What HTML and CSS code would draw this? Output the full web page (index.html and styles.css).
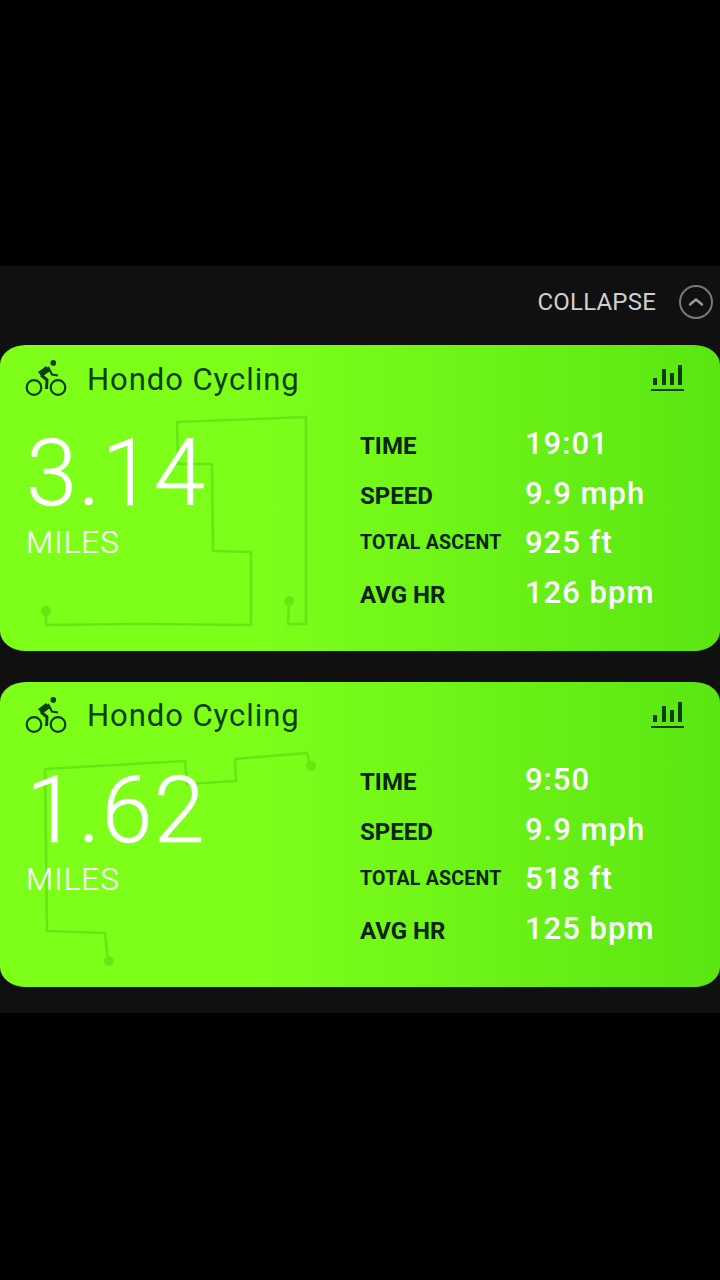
FILE: index.html
```html
<!DOCTYPE html>
<html lang="en">
<head>
<meta charset="utf-8">
<title>Hondo Cycling</title>
<link rel="stylesheet" href="styles.css">
</head>
<body>
<main class="panel">
  <div class="collapse-bar">
    <span class="collapse-label">COLLAPSE</span>
    <svg class="collapse-icon" viewBox="0 0 36 36"><circle cx="18" cy="18" r="16" fill="none" stroke="#77797a" stroke-width="2"/><path d="M12 20.5l6-5 6 5" fill="none" stroke="#9a9c9c" stroke-width="2.4" stroke-linecap="round" stroke-linejoin="round"/></svg>
  </div>
  <section class="card">
    <svg class="route" viewBox="0 0 720 306"><g fill="none" stroke="#64e814" stroke-width="2.6" stroke-linejoin="round"><path d="M46 266V280L140 279 251 280V207L213 206 212 119 178 119 177 77 306 72 306 279 288 279 289 256"/></g><circle cx="46" cy="266" r="5" fill="#64e814"/><circle cx="289" cy="256" r="5" fill="#64e814"/></svg>
    <header class="card-head">
      <svg class="bike" viewBox="0 0 42 36"><g fill="none" stroke="#0b3d06"><circle cx="9" cy="27.500" r="7.300" stroke-width="2.200"/><circle cx="33" cy="27.500" r="7.300" stroke-width="2.200"/><path d="M15 14.500L23 8.500" stroke-width="6.500"/><path d="M23 7L27 14.500 33 15.500" stroke-width="2.200"/><path d="M16 15L22 20 21.500 29" stroke-width="3"/></g><circle cx="28.300" cy="2.900" r="2.800" fill="#0b3d06"/></svg>
      <h2 class="card-title">Hondo Cycling</h2>
      <svg class="chart" viewBox="0 0 34 26"><g fill="#0b3d06"><rect x="2" y="13" width="4" height="7"/><rect x="11" y="4" width="4" height="16"/><rect x="19" y="8" width="4" height="12"/><rect x="27" y="0" width="4" height="20"/><rect x="0" y="24" width="33" height="2"/></g></svg>
    </header>
    <div class="card-body">
      <div class="distance">
        <div class="distance-value">3.14</div>
        <div class="distance-unit">MILES</div>
      </div>
      <dl class="stats">
        <dt class="stat-label">TIME</dt><dd class="stat-value">19:01</dd>
        <dt class="stat-label">SPEED</dt><dd class="stat-value">9.9 mph</dd>
        <dt class="stat-label stat-label-small">TOTAL ASCENT</dt><dd class="stat-value">925 ft</dd>
        <dt class="stat-label">AVG HR</dt><dd class="stat-value">126 bpm</dd>
      </dl>
    </div>
  </section>
  <section class="card">
    <svg class="route" viewBox="0 0 720 306"><g fill="none" stroke="#64e814" stroke-width="2.6" stroke-linejoin="round"><path d="M310 84L307 71 235 77 236 99 187 102 185 79 45 87 47 249 105 251 108 279"/></g><circle cx="311" cy="84" r="5" fill="#64e814"/><circle cx="109" cy="279" r="5" fill="#64e814"/></svg>
    <header class="card-head">
      <svg class="bike" viewBox="0 0 42 36"><g fill="none" stroke="#0b3d06"><circle cx="9" cy="27.500" r="7.300" stroke-width="2.200"/><circle cx="33" cy="27.500" r="7.300" stroke-width="2.200"/><path d="M15 14.500L23 8.500" stroke-width="6.500"/><path d="M23 7L27 14.500 33 15.500" stroke-width="2.200"/><path d="M16 15L22 20 21.500 29" stroke-width="3"/></g><circle cx="28.300" cy="2.900" r="2.800" fill="#0b3d06"/></svg>
      <h2 class="card-title">Hondo Cycling</h2>
      <svg class="chart" viewBox="0 0 34 26"><g fill="#0b3d06"><rect x="2" y="13" width="4" height="7"/><rect x="11" y="4" width="4" height="16"/><rect x="19" y="8" width="4" height="12"/><rect x="27" y="0" width="4" height="20"/><rect x="0" y="24" width="33" height="2"/></g></svg>
    </header>
    <div class="card-body">
      <div class="distance">
        <div class="distance-value">1.62</div>
        <div class="distance-unit">MILES</div>
      </div>
      <dl class="stats">
        <dt class="stat-label">TIME</dt><dd class="stat-value">9:50</dd>
        <dt class="stat-label">SPEED</dt><dd class="stat-value">9.9 mph</dd>
        <dt class="stat-label stat-label-small">TOTAL ASCENT</dt><dd class="stat-value">518 ft</dd>
        <dt class="stat-label">AVG HR</dt><dd class="stat-value">125 bpm</dd>
      </dl>
    </div>
  </section>
</main>
</body>
</html>
```
FILE: styles.css
```css
html, body { margin: 0; padding: 0; background: #000; }
body { width: 720px; height: 1280px; overflow: hidden; font-family: Roboto, "Liberation Sans", sans-serif; padding-top: 266px; box-sizing: border-box; }
.panel { background: #101010; height: 747px; display: flex; flex-direction: column; gap: 31px; }
.collapse-bar { height: 79px; margin-bottom: -31px; display: flex; align-items: center; justify-content: flex-end; padding: 0 6px 8px 0; box-sizing: border-box; gap: 22px; }
.collapse-label { color: #cfcfcf; font-size: 24px; letter-spacing: 0.2px; }
.collapse-icon { width: 36px; height: 36px; }
.card { position: relative; height: 306px; border-radius: 26px / 20px; background: linear-gradient(90deg, #7dff1a 0%, #7dff1a 35%, #5ae612 100%); overflow: hidden; flex: none; }
.card + .card { height: 305px; }
.route { position: absolute; inset: 0; width: 720px; height: 306px; }
.card-head { position: relative; height: 68px; display: flex; align-items: center; padding: 0 35px 0 25px; }
.bike { width: 42px; height: 36px; margin: -3px 21px 0 0; overflow: visible; }
.card-title { margin: 0 0 0 -1px; flex: 1; font-weight: 400; font-size: 31px; letter-spacing: 0.95px; color: #0b3d06; }
.card + .card .card-title { margin-top: -2px; }
.chart { width: 34px; height: 26px; margin-top: -3px; }
.card-body { position: relative; display: flex; }
.distance { width: 360px; padding-left: 26px; box-sizing: border-box; color: #fff; }
.distance-value { font-weight: 300; font-size: 92px; letter-spacing: 1.2px; line-height: 100px; margin-top: 11px; -webkit-text-stroke: 0.5px #fff; }
.distance-unit { font-weight: 300; font-size: 31.500px; letter-spacing: 1px; line-height: 36px; margin-top: 1px; -webkit-text-stroke: 0.2px #fff; }
.stats { margin: 6px 0 0; display: grid; grid-template-columns: 165px auto; grid-auto-rows: 49.500px; align-items: center; }
.card + .card .stats { margin-top: 5px; }
.stat-label { font-weight: 700; font-size: 24px; color: #06240a; padding-top: 5px; }
.stat-label-small { font-size: 19.500px; letter-spacing: 0.25px; padding-top: 0; }
.stat-value { margin: 0; font-weight: 500; font-size: 31px; letter-spacing: 1px; color: #fff; }
```
